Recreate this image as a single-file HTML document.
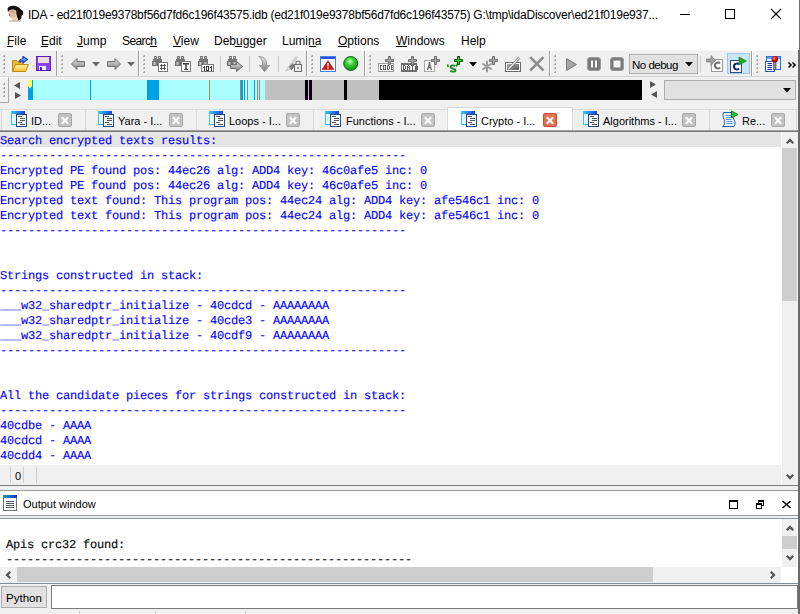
<!DOCTYPE html>
<html><head><meta charset="utf-8">
<style>
*{margin:0;padding:0;box-sizing:border-box}
html,body{width:800px;height:614px;overflow:hidden;background:#fff;position:relative;font-family:"Liberation Sans",sans-serif;font-size:12px;color:#000}
.a{position:absolute}
svg{position:absolute;overflow:visible}
.ui{font-family:"Liberation Sans",sans-serif;font-size:12px;white-space:nowrap;line-height:14px}
.mono{font-family:"Liberation Mono",monospace;font-size:12px;letter-spacing:-0.2px;white-space:pre;line-height:15px;text-rendering:geometricPrecision;-webkit-text-stroke:0.12px currentColor}
.ul{position:absolute;height:1px;background:#000;top:46px}
.grip{position:absolute;width:2px;height:18px}.grip::before,.grip::after{content:"";position:absolute;top:0;bottom:0;width:1px}.grip::after{left:1px;background:repeating-linear-gradient(to bottom,#a6a6a6 0,#a6a6a6 2px,transparent 2px,transparent 4px)}.grip::before{left:0;background:repeating-linear-gradient(to bottom,#d6d6d6 0,#d6d6d6 1px,#b0b0b0 1px,#b0b0b0 2px,transparent 2px,transparent 4px)}
.sep{position:absolute;top:51px;width:2px;height:25px;border-left:1px solid #a0a0a0;border-right:1px solid #fff}
.tsep{position:absolute;top:56px;width:1px;height:16px;background:#c8c8c8}
.tab{position:absolute;top:109px;height:21px;border-left:1px solid #d9d9d9}
.tt{position:absolute;top:115px;font-size:11px;line-height:12px;white-space:nowrap}
.cl{position:absolute;top:113px;width:14px;height:14px;border-radius:2px;background:#c2c2c2;border:1px solid #a8a8a8}
.cl::before,.cl::after{content:"";position:absolute;left:5px;top:1.5px;width:2px;height:9px;background:#fff;transform:rotate(45deg)}
.cl::after{transform:rotate(-45deg)}
.cl.act{background:#e3714f;border-color:#c8502e}
</style></head><body>
<!-- title bar -->
<svg style="left:4px;top:3px" width="22" height="22" viewBox="0 0 22 22">
<ellipse cx="9.5" cy="10" rx="5" ry="5.5" fill="#dcc0a6"/>
<path d="M3.5 6C4 3 8 2.5 11 3C14 3.5 16 5 17 7L17.5 15C16.5 16.5 15 17 14.5 18L13 14L12.5 8C11 6.5 8 6 5 7.5L4 9Z" fill="#17110e"/>
<circle cx="15.8" cy="9.8" r="3.4" fill="#17110e"/>
<path d="M8.5 14.5L13 13.5L14 18.5L8 18.5Z" fill="#e8d2be"/>
<path d="M4.5 18.5L17.5 18.5L17 17.5L5.5 17.5Z" fill="#c8a890"/>
<ellipse cx="5.6" cy="12" rx="1" ry="0.8" fill="#a85040"/>
<ellipse cx="8.5" cy="9" rx="2.5" ry="0.8" fill="#b89a88"/>
</svg>
<div id="title" class="a ui" style="left:28px;top:8px;letter-spacing:-0.227px">IDA - ed21f019e9378bf56d7fd6c196f43575.idb (ed21f019e9378bf56d7fd6c196f43575) G:\tmp\idaDiscover\ed21f019e937...</div>
<div class="a" style="left:680px;top:14px;width:10px;height:1px;background:#000"></div>
<div class="a" style="left:725px;top:9px;width:10px;height:10px;border:1px solid #000"></div>
<svg style="left:771px;top:9px" width="10" height="10" viewBox="0 0 10 10"><path d="M0 0L10 10M10 0L0 10" stroke="#000" stroke-width="1.1"/></svg>

<!-- menu -->
<div id="menu" class="a ui" style="left:0;top:34px;width:500px;height:14px">
<span class="a" style="left:7px">File</span>
<span class="a" style="left:41px">Edit</span>
<span class="a" style="left:77px">Jump</span>
<span class="a" style="left:122px;letter-spacing:-0.6px">Search</span>
<span class="a" style="left:173px">View</span>
<span class="a" style="left:214px">Debugger</span>
<span class="a" style="left:282px">Lumina</span>
<span class="a" style="left:338px">Options</span>
<span class="a" style="left:396px">Windows</span>
<span class="a" style="left:461px">Help</span>
</div>
<div class="ul" style="left:7px;width:6px"></div>
<div class="ul" style="left:41px;width:7px"></div>
<div class="ul" style="left:77px;width:6px"></div>
<div class="ul" style="left:150px;width:7px"></div>
<div class="ul" style="left:173px;width:8px"></div>
<div class="ul" style="left:235px;width:7px"></div>
<div class="ul" style="left:309px;width:7px"></div>
<div class="ul" style="left:338px;width:9px"></div>
<div class="ul" style="left:396px;width:11px"></div>

<!-- toolbar -->
<div class="a" style="left:0;top:50px;width:798px;height:27px;background:#f0f0f0;border-top:1px solid #f8f8f8;border-bottom:1px solid #d5d5d5"></div>
<div class="grip" style="left:3px;top:55px"></div>
<div class="sep" style="left:56px"></div>
<div class="grip" style="left:61px;top:55px"></div>
<div class="sep" style="left:138px"></div>
<div class="grip" style="left:143px;top:55px"></div>
<div class="tsep" style="left:220px"></div>
<div class="tsep" style="left:249px"></div>
<div class="tsep" style="left:278px"></div>
<div class="sep" style="left:306px"></div>
<div class="grip" style="left:311px;top:55px"></div>
<div class="sep" style="left:364px"></div>
<div class="grip" style="left:369px;top:55px"></div>
<div class="sep" style="left:549px"></div>
<div class="grip" style="left:554px;top:55px"></div>
<div class="tsep" style="left:700px"></div>
<div class="sep" style="left:751px"></div>
<div class="grip" style="left:756px;top:55px"></div>

<!-- open folder -->
<svg width="0" height="0" style="position:absolute"><defs>
<linearGradient id="gbin" x1="0" y1="0" x2="1" y2="0"><stop offset="0" stop-color="#7a7a7a"/><stop offset="0.5" stop-color="#c8c8c8"/><stop offset="1" stop-color="#7a7a7a"/></linearGradient>
<linearGradient id="ga" x1="0" y1="0" x2="0" y2="1"><stop offset="0" stop-color="#e4e4e4"/><stop offset="1" stop-color="#7e7e7e"/></linearGradient>
<linearGradient id="gfold" x1="0" y1="0" x2="0" y2="1"><stop offset="0" stop-color="#fff6a0"/><stop offset="1" stop-color="#f0c030"/></linearGradient>
<symbol id="bino" viewBox="0 0 11 10">
<rect x="2.5" y="0.5" width="2" height="2" fill="#d0d0d0" stroke="#7a7a7a"/>
<rect x="6.5" y="0.5" width="2" height="2" fill="#d0d0d0" stroke="#7a7a7a"/>
<rect x="1.5" y="3.5" width="3" height="1" fill="#e8e8e8" stroke="#7a7a7a"/>
<rect x="5.5" y="3.5" width="4" height="1" fill="#e8e8e8" stroke="#7a7a7a"/>
<rect x="0.5" y="5.5" width="4" height="4" fill="url(#gbin)" stroke="#707070"/>
<rect x="5.5" y="5.5" width="4" height="4" fill="url(#gbin)" stroke="#707070"/>
</symbol>
</defs></svg>
<svg style="left:12px;top:56px" width="17" height="17" viewBox="0 0 17 17">
<path d="M0.5 4.5L5 4.5L6 5.5L11 5.5L11 15.5L0.5 15.5Z" fill="#e8b830" stroke="#c08a10"/>
<path d="M3.5 8.5L16.5 8.5L13.5 15.5L0.5 15.5Z" fill="url(#gfold)" stroke="#c08a10"/>
<path d="M7.8 6.5C7.8 4.5 9 3.5 11.5 3.5" fill="none" stroke="#1a2fd0" stroke-width="2.2"/><path d="M11 0.5L15.5 3.5L11 6.8Z" fill="#30d8f8" stroke="#1a2fd0" stroke-width="1.2" stroke-linejoin="round"/><path d="M8.5 5C9 4 10 3.6 12 3.6" fill="none" stroke="#6ae8ff" stroke-width="0.7"/>
</svg>
<svg style="left:36px;top:56px" width="16" height="16" viewBox="0 0 16 16">
<rect x="0" y="0" width="15" height="15" fill="#6a22d6"/>
<rect x="1" y="1" width="13" height="13" fill="#8a44ee"/>
<rect x="2" y="1" width="11" height="6" fill="#ecdcdc"/>
<rect x="3" y="10" width="7" height="5" fill="#f4f4ff"/>
<rect x="4" y="11" width="2" height="3" fill="#5a18b8"/>
<rect x="0" y="0" width="15" height="1" fill="#5a18b8"/><rect x="0" y="14" width="15" height="1" fill="#5a18b8"/>
</svg>
<svg style="left:71px;top:58px" width="14" height="12" viewBox="0 0 14 12">
<path d="M0.5 6L6 0.5L6 3.5L13.5 3.5L13.5 8.5L6 8.5L6 11.5Z" fill="url(#ga)" stroke="#737373"/>
</svg>
<svg style="left:92px;top:62px" width="8" height="5" viewBox="0 0 8 5"><path d="M0 0L8 0L4 4.5Z" fill="#6a6a6a"/></svg>
<svg style="left:107px;top:58px" width="14" height="12" viewBox="0 0 14 12">
<path d="M13.5 6L8 0.5L8 3.5L0.5 3.5L0.5 8.5L8 8.5L8 11.5Z" fill="url(#ga)" stroke="#737373"/>
</svg>
<svg style="left:127px;top:62px" width="8" height="5" viewBox="0 0 8 5"><path d="M0 0L8 0L4 4.5Z" fill="#6a6a6a"/></svg>
<svg style="left:152px;top:56px" width="17" height="17" viewBox="0 0 17 17">
<use href="#bino" x="0" y="0" width="11" height="10"/>
<rect x="6.5" y="6.5" width="9" height="9" fill="#fff" stroke="#7a7a7a"/>
<path d="M9.5 8L9.5 14M12.5 8L12.5 14M8 9.5L14 9.5M8 12.5L14 12.5" stroke="#555" stroke-width="1"/>
</svg>
<svg style="left:175px;top:56px" width="17" height="17" viewBox="0 0 17 17">
<use href="#bino" x="0" y="0" width="11" height="10"/>
<rect x="6.5" y="5.5" width="9" height="10" fill="#fff" stroke="#7a7a7a"/>
<rect x="8" y="7" width="6" height="1.5" fill="#444"/><rect x="10.2" y="7" width="1.6" height="7" fill="#444"/><rect x="9" y="13" width="4" height="1" fill="#444"/>
<rect x="8" y="8" width="1" height="1" fill="#888"/><rect x="13" y="8" width="1" height="1" fill="#888"/>
</svg>
<svg style="left:198px;top:56px" width="17" height="17" viewBox="0 0 17 17"><use href="#bino" x="0" y="0" width="11" height="10"/><rect x="3.5" y="8.5" width="12" height="7" fill="#fff" stroke="#7a7a7a"/><rect x="6" y="10" width="1" height="1" fill="#3a3a3a"/><rect x="5" y="11" width="1" height="1" fill="#3a3a3a"/><rect x="6" y="11" width="1" height="1" fill="#3a3a3a"/><rect x="6" y="12" width="1" height="1" fill="#3a3a3a"/><rect x="6" y="13" width="1" height="1" fill="#3a3a3a"/><rect x="6" y="14" width="1" height="1" fill="#3a3a3a"/><rect x="8" y="10" width="1" height="1" fill="#3a3a3a"/><rect x="9" y="10" width="1" height="1" fill="#3a3a3a"/><rect x="10" y="10" width="1" height="1" fill="#3a3a3a"/><rect x="8" y="11" width="1" height="1" fill="#3a3a3a"/><rect x="10" y="11" width="1" height="1" fill="#3a3a3a"/><rect x="8" y="12" width="1" height="1" fill="#3a3a3a"/><rect x="10" y="12" width="1" height="1" fill="#3a3a3a"/><rect x="8" y="13" width="1" height="1" fill="#3a3a3a"/><rect x="10" y="13" width="1" height="1" fill="#3a3a3a"/><rect x="8" y="14" width="1" height="1" fill="#3a3a3a"/><rect x="9" y="14" width="1" height="1" fill="#3a3a3a"/><rect x="10" y="14" width="1" height="1" fill="#3a3a3a"/><rect x="13" y="10" width="1" height="1" fill="#3a3a3a"/><rect x="12" y="11" width="1" height="1" fill="#3a3a3a"/><rect x="13" y="11" width="1" height="1" fill="#3a3a3a"/><rect x="13" y="12" width="1" height="1" fill="#3a3a3a"/><rect x="13" y="13" width="1" height="1" fill="#3a3a3a"/><rect x="13" y="14" width="1" height="1" fill="#3a3a3a"/></svg>
<svg style="left:227px;top:56px" width="17" height="17" viewBox="0 0 17 17">
<use href="#bino" x="0" y="0" width="11" height="10"/>
<path d="M3.5 8.5L9.5 8.5L9.5 5.5L15.5 10.5L9.5 15.5L9.5 12.5L3.5 12.5Z" fill="url(#ga)" stroke="#6a6a6a"/>
</svg>
<svg style="left:258px;top:56px" width="13" height="17" viewBox="0 0 13 17">
<path d="M0.5 0.5C5 0.5 8.5 3 8.5 7L8.5 9.5L11.5 9.5L6.5 15.5L1.5 9.5L4.5 9.5L4.5 7C4.5 4 3 2 0.5 0.5Z" fill="url(#ga)" stroke="#8a8a8a" stroke-width="0.8"/>
</svg>
<svg style="left:285px;top:55px" width="17" height="17" viewBox="0 0 17 17">
<path d="M0.5 16L11 1.5L12.5 2.5L4 15Z" fill="#dcdcdc" stroke="#c0c0c0" stroke-width="0.8"/>
<path d="M4 12L7.5 8L10 11L6.5 15.5Z" fill="#7a7a7a"/>
<rect x="9.5" y="9.5" width="7" height="7" fill="#e8e8e8" stroke="#707070"/>
<path d="M11 9.5L11 7.5C11 5.5 15 5.5 15 7.5L15 9.5" fill="none" stroke="#707070" stroke-width="1.2"/>
<rect x="12.5" y="12" width="1" height="2" fill="#555"/>
</svg>
<svg style="left:320px;top:56px" width="16" height="16" viewBox="0 0 16 16">
<rect x="0.5" y="0.5" width="15" height="15" fill="#fff" stroke="#3a84f0"/>
<rect x="1" y="1" width="14" height="2" fill="#2f50d8"/>
<path d="M8 4.5L14 13.5L2 13.5Z" fill="#d01818" stroke="#a00" stroke-width="0.5"/>
<rect x="7.3" y="7" width="1.4" height="3.5" fill="#fff"/><rect x="7.3" y="11.3" width="1.4" height="1.3" fill="#fff"/>
</svg>
<svg style="left:343px;top:56px" width="16" height="16" viewBox="0 0 16 16">
<defs><radialGradient id="gb" cx="0.45" cy="0.35" r="0.6"><stop offset="0" stop-color="#c8ffc0"/><stop offset="0.45" stop-color="#3cd03c"/><stop offset="1" stop-color="#119a11"/></radialGradient></defs>
<circle cx="7.7" cy="7.5" r="7" fill="url(#gb)" stroke="#0a5a0a" stroke-width="0.9"/>
</svg>
<svg style="left:378px;top:56px" width="17" height="17" viewBox="0 0 17 17"><rect x="0.5" y="7.5" width="15" height="8" fill="#fff" stroke="#a0a0a0"/><rect x="2" y="9" width="1" height="1" fill="#5e5e5e"/><rect x="3" y="9" width="1" height="1" fill="#5e5e5e"/><rect x="2" y="10" width="1" height="1" fill="#5e5e5e"/><rect x="2" y="11" width="1" height="1" fill="#5e5e5e"/><rect x="2" y="12" width="1" height="1" fill="#5e5e5e"/><rect x="2" y="13" width="1" height="1" fill="#5e5e5e"/><rect x="3" y="13" width="1" height="1" fill="#5e5e5e"/><rect x="5" y="9" width="1" height="1" fill="#5e5e5e"/><rect x="6" y="9" width="1" height="1" fill="#5e5e5e"/><rect x="7" y="9" width="1" height="1" fill="#5e5e5e"/><rect x="5" y="10" width="1" height="1" fill="#5e5e5e"/><rect x="7" y="10" width="1" height="1" fill="#5e5e5e"/><rect x="5" y="11" width="1" height="1" fill="#5e5e5e"/><rect x="7" y="11" width="1" height="1" fill="#5e5e5e"/><rect x="5" y="12" width="1" height="1" fill="#5e5e5e"/><rect x="7" y="12" width="1" height="1" fill="#5e5e5e"/><rect x="5" y="13" width="1" height="1" fill="#5e5e5e"/><rect x="6" y="13" width="1" height="1" fill="#5e5e5e"/><rect x="7" y="13" width="1" height="1" fill="#5e5e5e"/><rect x="9" y="9" width="1" height="1" fill="#5e5e5e"/><rect x="10" y="9" width="1" height="1" fill="#5e5e5e"/><rect x="9" y="10" width="1" height="1" fill="#5e5e5e"/><rect x="11" y="10" width="1" height="1" fill="#5e5e5e"/><rect x="9" y="11" width="1" height="1" fill="#5e5e5e"/><rect x="11" y="11" width="1" height="1" fill="#5e5e5e"/><rect x="9" y="12" width="1" height="1" fill="#5e5e5e"/><rect x="11" y="12" width="1" height="1" fill="#5e5e5e"/><rect x="9" y="13" width="1" height="1" fill="#5e5e5e"/><rect x="10" y="13" width="1" height="1" fill="#5e5e5e"/><rect x="13" y="9" width="1" height="1" fill="#5e5e5e"/><rect x="14" y="9" width="1" height="1" fill="#5e5e5e"/><rect x="13" y="10" width="1" height="1" fill="#5e5e5e"/><rect x="13" y="11" width="1" height="1" fill="#5e5e5e"/><rect x="14" y="11" width="1" height="1" fill="#5e5e5e"/><rect x="13" y="12" width="1" height="1" fill="#5e5e5e"/><rect x="13" y="13" width="1" height="1" fill="#5e5e5e"/><rect x="14" y="13" width="1" height="1" fill="#5e5e5e"/><g transform="translate(7,0)"><path d="M3.5 0.5L5.5 0.5L5.5 3.5L8.5 3.5L8.5 5.5L5.5 5.5L5.5 8.5L3.5 8.5L3.5 5.5L0.5 5.5L0.5 3.5L3.5 3.5Z" fill="#a8a8a8" stroke="#6e6e6e"/></g></svg>
<svg style="left:401px;top:56px" width="17" height="17" viewBox="0 0 17 17"><rect x="0" y="7" width="16" height="9" fill="#6e6e6e"/><rect x="1" y="9" width="14" height="5" fill="#fff"/><rect x="2" y="9" width="1" height="1" fill="#5e5e5e"/><rect x="3" y="9" width="1" height="1" fill="#5e5e5e"/><rect x="2" y="10" width="1" height="1" fill="#5e5e5e"/><rect x="4" y="10" width="1" height="1" fill="#5e5e5e"/><rect x="2" y="11" width="1" height="1" fill="#5e5e5e"/><rect x="4" y="11" width="1" height="1" fill="#5e5e5e"/><rect x="2" y="12" width="1" height="1" fill="#5e5e5e"/><rect x="4" y="12" width="1" height="1" fill="#5e5e5e"/><rect x="2" y="13" width="1" height="1" fill="#5e5e5e"/><rect x="3" y="13" width="1" height="1" fill="#5e5e5e"/><rect x="7" y="9" width="1" height="1" fill="#5e5e5e"/><rect x="6" y="10" width="1" height="1" fill="#5e5e5e"/><rect x="8" y="10" width="1" height="1" fill="#5e5e5e"/><rect x="6" y="11" width="1" height="1" fill="#5e5e5e"/><rect x="7" y="11" width="1" height="1" fill="#5e5e5e"/><rect x="8" y="11" width="1" height="1" fill="#5e5e5e"/><rect x="6" y="12" width="1" height="1" fill="#5e5e5e"/><rect x="8" y="12" width="1" height="1" fill="#5e5e5e"/><rect x="6" y="13" width="1" height="1" fill="#5e5e5e"/><rect x="8" y="13" width="1" height="1" fill="#5e5e5e"/><rect x="10" y="9" width="1" height="1" fill="#5e5e5e"/><rect x="11" y="9" width="1" height="1" fill="#5e5e5e"/><rect x="12" y="9" width="1" height="1" fill="#5e5e5e"/><rect x="11" y="10" width="1" height="1" fill="#5e5e5e"/><rect x="11" y="11" width="1" height="1" fill="#5e5e5e"/><rect x="11" y="12" width="1" height="1" fill="#5e5e5e"/><rect x="11" y="13" width="1" height="1" fill="#5e5e5e"/><rect x="11" y="14" width="1" height="1" fill="#5e5e5e"/><rect x="15" y="9" width="1" height="1" fill="#5e5e5e"/><rect x="14" y="10" width="1" height="1" fill="#5e5e5e"/><rect x="16" y="10" width="1" height="1" fill="#5e5e5e"/><rect x="14" y="11" width="1" height="1" fill="#5e5e5e"/><rect x="15" y="11" width="1" height="1" fill="#5e5e5e"/><rect x="16" y="11" width="1" height="1" fill="#5e5e5e"/><rect x="14" y="12" width="1" height="1" fill="#5e5e5e"/><rect x="16" y="12" width="1" height="1" fill="#5e5e5e"/><rect x="14" y="13" width="1" height="1" fill="#5e5e5e"/><rect x="16" y="13" width="1" height="1" fill="#5e5e5e"/><g transform="translate(7,0)"><path d="M3.5 0.5L5.5 0.5L5.5 3.5L8.5 3.5L8.5 5.5L5.5 5.5L5.5 8.5L3.5 8.5L3.5 5.5L0.5 5.5L0.5 3.5L3.5 3.5Z" fill="#a8a8a8" stroke="#6e6e6e"/></g></svg>
<svg style="left:424px;top:56px" width="17" height="17" viewBox="0 0 17 17">
<rect x="0.5" y="4.5" width="10" height="11" fill="#fff" stroke="#a8a8a8"/>
<path d="M3.5 14L5.5 7.5L7.5 14M4 11.5L7 11.5" fill="none" stroke="#6a6a6a" stroke-width="1.3"/><circle cx="5.5" cy="7" r="1" fill="#6a6a6a"/>
<g transform="translate(7,0)"><path d="M3.5 0.5L5.5 0.5L5.5 3.5L8.5 3.5L8.5 5.5L5.5 5.5L5.5 8.5L3.5 8.5L3.5 5.5L0.5 5.5L0.5 3.5L3.5 3.5Z" fill="#a8a8a8" stroke="#6e6e6e"/></g></svg>
<svg style="left:446px;top:56px" width="18" height="17" viewBox="0 0 18 17">
<path d="M9.2 10.2C8.5 9 4.5 9 4.5 11C4.5 13 9.5 12.5 9.5 14.2C9.5 16 5.5 16 4.2 14.8" fill="none" stroke="#1f8a1f" stroke-width="1.9"/>
<path d="M2.2 8.5C1.5 9.5 1.8 10.5 2.2 11" fill="none" stroke="#1f8a1f" stroke-width="1.7"/>
<path d="M10.8 7.5C11.5 8.5 11 10 10.2 10.5" fill="none" stroke="#1f8a1f" stroke-width="1.5"/>
<g transform="translate(8,0)"><path d="M3.5 0.5L5.5 0.5L5.5 3.5L8.5 3.5L8.5 5.5L5.5 5.5L5.5 8.5L3.5 8.5L3.5 5.5L0.5 5.5L0.5 3.5L3.5 3.5Z" fill="#2ed82e" stroke="#0b4a0b"/></g></svg>
<svg style="left:469px;top:62px" width="8" height="5" viewBox="0 0 8 5"><path d="M0 0L8 0L4 4.5Z" fill="#000"/></svg>
<svg style="left:482px;top:56px" width="17" height="17" viewBox="0 0 17 17">
<path d="M5 5.5L5 15.5M1 8L9 13M9 8L1 13" stroke="#9a9a9a" stroke-width="2" stroke-linecap="round"/>
<g transform="translate(7,0)"><path d="M3.5 0.5L5.5 0.5L5.5 3.5L8.5 3.5L8.5 5.5L5.5 5.5L5.5 8.5L3.5 8.5L3.5 5.5L0.5 5.5L0.5 3.5L3.5 3.5Z" fill="#a8a8a8" stroke="#6e6e6e"/></g></svg>
<svg style="left:505px;top:56px" width="17" height="17" viewBox="0 0 17 17">
<defs><linearGradient id="ged" x1="0" y1="0" x2="1" y2="1"><stop offset="0" stop-color="#b0b0b0"/><stop offset="1" stop-color="#5a5a5a"/></linearGradient></defs>
<rect x="0.5" y="6.5" width="15" height="9" fill="#fff" stroke="#6a6a6a"/>
<rect x="2" y="8" width="12" height="6" fill="url(#ged)"/>
<path d="M3.5 13L14.5 1.5" stroke="#7a7a7a" stroke-width="2.6"/><path d="M3.5 13L14.5 1.5" stroke="#f4f4f4" stroke-width="1.1"/>
</svg>
<svg style="left:529px;top:56px" width="16" height="16" viewBox="0 0 16 16">
<path d="M1.2 1.2L14.5 14.5M14.5 1.2L1.2 14.5" stroke="#8e8e8e" stroke-width="2.6"/>
</svg>
<svg style="left:566px;top:58px" width="11" height="13" viewBox="0 0 11 13"><path d="M0.5 0.5L10.5 6.5L0.5 12.5Z" fill="#a4a4a4" stroke="#7a7a7a"/></svg>
<svg style="left:587px;top:57px" width="14" height="14" viewBox="0 0 14 14"><rect x="0.5" y="0.5" width="13" height="13" rx="2.5" fill="#7a7a7a" stroke="#9a9a9a"/><rect x="4" y="3.5" width="2" height="7" fill="#fff"/><rect x="8" y="3.5" width="2" height="7" fill="#fff"/></svg>
<svg style="left:610px;top:57px" width="14" height="14" viewBox="0 0 14 14"><rect x="0.5" y="0.5" width="13" height="13" rx="2.5" fill="#7a7a7a" stroke="#9a9a9a"/><rect x="3.5" y="3.5" width="7" height="7" fill="#f4f4f4"/></svg>
<div class="a" style="left:629px;top:54px;width:69px;height:20px;background:#e1e1e1;border:1px solid #adadad"></div>
<div class="a ui" style="left:632px;top:58px;font-size:11.5px;letter-spacing:-0.5px;color:#000">No debug</div>
<svg style="left:685px;top:62px" width="8" height="5" viewBox="0 0 8 5"><path d="M0 0L8 0L4 4.5Z" fill="#000"/></svg>
<svg style="left:706px;top:55px" width="18" height="17" viewBox="0 0 18 17">
<rect x="5.5" y="4.5" width="11" height="12" fill="#fff" stroke="#9a9a9a"/>
<path d="M14 8.5C13 7 9 7 9 10.5C9 14 13 14 14 12.5" fill="none" stroke="#6a6a6a" stroke-width="2"/>
<path d="M0.5 4L5 4L5 0.5L9.5 5.5L5 10.5L5 7L0.5 7Z" fill="#a0a0a0" stroke="#7d7d7d" stroke-width="0.8"/>
</svg>
<div class="a" style="left:727px;top:53px;width:23px;height:21px;background:#cce4f7;border:1px solid #99c9ef"></div>
<svg style="left:730px;top:56px" width="18" height="17" viewBox="0 0 18 17">
<rect x="0.5" y="4.5" width="11" height="12" fill="#fff" stroke="#2c4a86"/>
<path d="M9 8.5C8 7 4 7 4 10.5C4 14 8 14 9 12.5" fill="none" stroke="#0a1f7a" stroke-width="2"/>
<path d="M9 1L16.5 5L9 9Z" fill="#22aa22" stroke="#0f7a0f" stroke-width="0.6"/>
</svg>
<svg style="left:765px;top:55px" width="17" height="17" viewBox="0 0 17 17">
<defs><radialGradient id="grb" cx="0.4" cy="0.35" r="0.6"><stop offset="0" stop-color="#ff9a9a"/><stop offset="0.5" stop-color="#e81010"/><stop offset="1" stop-color="#a00000"/></radialGradient></defs>
<rect x="1.5" y="1.5" width="14" height="13" fill="#e8f8ff" stroke="#2f74e0"/>
<rect x="2" y="2" width="13" height="2" fill="#5aa8f0"/>
<rect x="0.5" y="6.5" width="9" height="10" fill="#fafcff" stroke="#2a5aa0"/>
<rect x="2.5" y="8" width="4.5" height="1" fill="#1a30b0"/><rect x="2.5" y="10" width="4.5" height="1" fill="#1a30b0"/><rect x="2.5" y="12" width="4.5" height="1" fill="#1a30b0"/><rect x="2.5" y="14" width="4.5" height="1" fill="#1a30b0"/>
<rect x="8.5" y="6.5" width="2.5" height="8" fill="#8e8e8e" stroke="#3a3a70" stroke-width="0.6"/>
<circle cx="9.8" cy="4.3" r="3.2" fill="url(#grb)"/>
</svg>
<svg style="left:788px;top:62px" width="9" height="6" viewBox="0 0 9 6"><path d="M0.5 0.5L3 3L0.5 5.5M4.5 0.5L7 3L4.5 5.5" fill="none" stroke="#000" stroke-width="1.6"/></svg>


<!-- nav toolbar -->
<div class="a" style="left:0;top:77px;width:798px;height:27px;background:#f0f0f0"></div>
<div class="a" style="left:0;top:77px;width:9px;height:26px;border-right:1px solid #a8a8a8;border-bottom:1px solid #a8a8a8;border-top:1px solid #fff"></div>
<div class="grip" style="left:3px;top:83px;height:14px"></div>
<svg style="left:14px;top:82px" width="7" height="18" viewBox="0 0 7 18"><path d="M6 0L6 7L0 3.5Z" fill="#555"/><path d="M1 10L1 17L7 13.5Z" fill="#555"/></svg>
<div class="a" style="left:28px;top:80px;width:237px;height:20px;background:#aaffff"></div>
<div class="a" style="left:28px;top:80px;width:5px;height:20px;background:#00a0e8"></div>
<svg style="left:28px;top:80px" width="4" height="9" viewBox="0 0 4 9"><path d="M0 0L4 0L4 6L2 8.5L0 6Z" fill="#ffff60"/></svg>
<div class="a" style="left:90px;top:80px;width:1px;height:20px;background:#00a0e8"></div>
<div class="a" style="left:147px;top:80px;width:12px;height:20px;background:#00a0e8"></div>
<div class="a" style="left:209px;top:80px;width:1px;height:20px;background:#b08050"></div>
<div class="a" style="left:240px;top:80px;width:1px;height:20px;background:#b08050"></div>
<div class="a" style="left:241px;top:80px;width:2px;height:20px;background:#00a0e8"></div>
<div class="a" style="left:244px;top:80px;width:1px;height:20px;background:#00a0e8"></div>
<div class="a" style="left:247px;top:80px;width:1px;height:20px;background:#b08050"></div>
<div class="a" style="left:254px;top:80px;width:1px;height:20px;background:#00a0e8"></div>
<div class="a" style="left:257px;top:80px;width:1px;height:20px;background:#b08050"></div>
<div class="a" style="left:259px;top:80px;width:1px;height:20px;background:#b08050"></div>
<div class="a" style="left:265px;top:80px;width:114px;height:20px;background:#c0c0c0"></div>
<div class="a" style="left:305px;top:80px;width:7px;height:20px;background:#000"></div>
<div class="a" style="left:308px;top:80px;width:1px;height:20px;background:#ff9cff"></div>
<div class="a" style="left:344px;top:80px;width:3px;height:20px;background:#000"></div>
<div class="a" style="left:379px;top:80px;width:263px;height:20px;background:#000"></div>
<svg style="left:650px;top:81px" width="7" height="18" viewBox="0 0 7 18"><path d="M0 0L0 7L6 3.5Z" fill="#555"/><path d="M7 10L7 17L1 13.5Z" fill="#555"/></svg>
<div class="a" style="left:664px;top:80px;width:132px;height:20px;background:#e1e1e1;border:1px solid #adadad"></div>
<svg style="left:783px;top:88px" width="8" height="5" viewBox="0 0 8 5"><path d="M0 0L8 0L4 4.5Z" fill="#000"/></svg>

<!-- tabs -->
<div class="a" style="left:0;top:104px;width:798px;height:27px;background:#f0f0f0"></div>
<div class="a" style="left:0;top:109px;width:798px;height:1px;background:#dcdcdc"></div>
<div class="tab" style="left:1px;width:85px"></div>
<div class="tab" style="left:85px;width:111px"></div>
<div class="tab" style="left:196px;width:117px"></div>
<div class="tab" style="left:313px;width:134px"></div>
<div class="tab" style="left:572px;width:137px"></div>
<div class="tab" style="left:709px;width:88px;border-right:1px solid #d9d9d9"></div>
<div class="a" style="left:447px;top:107px;width:126px;height:24px;background:#fff;border:1px solid #d9d9d9;border-bottom:none"></div>

<svg width="0" height="0" style="position:absolute"><defs>
<linearGradient id="gdb" x1="0" y1="0" x2="1" y2="0"><stop offset="0" stop-color="#38c8f8"/><stop offset="1" stop-color="#2040d8"/></linearGradient>
<symbol id="doc" viewBox="0 0 17 17">
<rect x="0" y="0" width="14" height="14" fill="url(#gdb)"/>
<rect x="1" y="3" width="12" height="10" fill="#e4fcff"/>
<rect x="5" y="3" width="11" height="13" fill="#1f4a8a"/>
<rect x="6" y="4" width="9" height="11" fill="#f8fbff"/>
<rect x="7" y="5" width="4" height="1" fill="#555"/>
<rect x="9" y="7" width="5" height="1" fill="#555"/>
<rect x="9" y="9" width="5" height="1" fill="#555"/>
<rect x="7" y="11" width="4" height="1" fill="#555"/>
<rect x="9" y="13" width="5" height="1" fill="#555"/>
</symbol>
</defs></svg>
<svg style="left:11px;top:111px" width="17" height="17" viewBox="0 0 17 17"><use href="#doc"/></svg>
<div class="tt" style="left:31px">ID...</div>
<div class="cl" style="left:58px"></div>

<svg style="left:98px;top:111px" width="17" height="17" viewBox="0 0 17 17"><use href="#doc"/></svg>
<div class="tt" style="left:118px">Yara - I...</div>
<div class="cl" style="left:169px"></div>

<svg style="left:209px;top:111px" width="17" height="17" viewBox="0 0 17 17">
<use href="#doc"/>
</svg>
<div class="tt" style="left:229px">Loops - I...</div>
<div class="cl" style="left:286px"></div>

<svg style="left:325px;top:111px" width="17" height="17" viewBox="0 0 17 17">
<use href="#doc"/>
</svg>
<div class="tt" style="left:346px">Functions - I...</div>
<div class="cl" style="left:421px"></div>

<svg style="left:461px;top:111px" width="17" height="17" viewBox="0 0 17 17">
<use href="#doc"/>
</svg>
<div class="tt" style="left:481px">Crypto - I...</div>
<div class="cl act" style="left:543px"></div>

<svg style="left:583px;top:111px" width="17" height="17" viewBox="0 0 17 17">
<use href="#doc"/>
</svg>
<div class="tt" style="left:603px">Algorithms - I...</div>
<div class="cl" style="left:682px"></div>

<svg style="left:721px;top:110px" width="17" height="17" viewBox="0 0 17 17">
<path d="M2.5 2.5L10.5 2.5C11.5 5 12 7 12.5 9C14.5 11 14.5 14 13 16.5L1.5 16.5C3.5 15 4 13 3.5 11C3 9 1 6 2.5 2.5Z" fill="#f0f8ff" stroke="#2a5aa8"/>
<rect x="4.5" y="5" width="6" height="1" fill="#5a94dc"/><rect x="4.5" y="7" width="6" height="1" fill="#5a94dc"/><rect x="4.5" y="9" width="6" height="1" fill="#5a94dc"/>
<rect x="5.5" y="11" width="6" height="1" fill="#5a94dc"/><rect x="5.5" y="13" width="6" height="1" fill="#5a94dc"/>
<path d="M10.5 1L17 4.5L10.5 8Z" fill="#28c828" stroke="#0a5a0a" stroke-width="0.8"/>
</svg>
<div class="tt" style="left:742px">Re...</div>
<div class="cl" style="left:771px"></div>

<div class="a" style="left:0;top:130px;width:798px;height:1px;background:#a2a2a2"></div><div class="a" style="left:0;top:131px;width:798px;height:1px;background:#7a7a7a"></div>

<!-- content -->
<div class="a" style="left:0;top:132px;width:781px;height:15px;background:#e5e5e5"></div>
<div id="content" class="a mono" style="left:0;top:134px;color:#0000ff">Search encrypted texts results:
----------------------------------------------------------
Encrypted PE found pos: 44ec26 alg: ADD4 key: 46c0afe5 inc: 0
Encrypted PE found pos: 44ec26 alg: ADD4 key: 46c0afe5 inc: 0
Encrypted text found: This program pos: 44ec24 alg: ADD4 key: afe546c1 inc: 0
Encrypted text found: This program pos: 44ec24 alg: ADD4 key: afe546c1 inc: 0
----------------------------------------------------------


Strings constructed in stack:
----------------------------------------------------------
___w32_sharedptr_initialize - 40cdcd - AAAAAAAA
___w32_sharedptr_initialize - 40cde3 - AAAAAAAA
___w32_sharedptr_initialize - 40cdf9 - AAAAAAAA
----------------------------------------------------------


All the candidate pieces for strings constructed in stack:
----------------------------------------------------------
40cdbe - AAAA
40cdcd - AAAA
40cdd4 - AAAA</div>
<!-- v scrollbar -->
<div class="a" style="left:782px;top:132px;width:16px;height:353px;background:#f0f0f0"></div>
<div class="a" style="left:782px;top:148px;width:15px;height:153px;background:#cdcdcd"></div>
<svg style="left:786px;top:138px" width="8" height="6" viewBox="0 0 8 6"><path d="M0.8 5.2L4 2L7.2 5.2" fill="none" stroke="#555" stroke-width="2.3"/></svg>
<svg style="left:786px;top:474px" width="8" height="6" viewBox="0 0 8 6"><path d="M0.8 0.8L4 4L7.2 0.8" fill="none" stroke="#555" stroke-width="2.3"/></svg>

<!-- status -->
<div class="a" style="left:0;top:465px;width:781px;height:20px;background:#f0f0f0"></div>
<div class="a" style="left:10px;top:467px;width:1px;height:16px;background:#d0d0d0"></div>
<div class="a" style="left:23px;top:467px;width:1px;height:16px;background:#d0d0d0"></div>
<div class="a" style="left:36px;top:467px;width:1px;height:16px;background:#d0d0d0"></div>
<div class="a ui" style="left:15px;top:470px;font-size:11px;line-height:12px">0</div>

<!-- splitter -->
<div class="a" style="left:0;top:485px;width:798px;height:1px;background:#7a7a7a"></div>
<div class="a" style="left:0;top:486px;width:798px;height:4px;background:#f0f0f0"></div>
<div class="a" style="left:0;top:490px;width:798px;height:1px;background:#999"></div>

<!-- output header -->
<div class="a" style="left:0;top:491px;width:798px;height:24px;background:#fff"></div>
<svg style="left:3px;top:495px" width="14" height="16" viewBox="0 0 14 16">
<defs><linearGradient id="gob" x1="0" y1="0" x2="1" y2="0"><stop offset="0" stop-color="#1aa0a8"/><stop offset="1" stop-color="#1030c8"/></linearGradient></defs>
<rect x="0" y="0" width="14" height="16" fill="#6a747e"/>
<rect x="1" y="3" width="12" height="12" fill="#fdfeff"/>
<rect x="0" y="0" width="14" height="3" fill="url(#gob)"/>
<rect x="3" y="6" width="8" height="1" fill="#505860"/><rect x="3" y="8" width="8" height="1" fill="#505860"/><rect x="3" y="10" width="8" height="1" fill="#505860"/><rect x="3" y="12" width="8" height="1" fill="#505860"/>
</svg>
<div class="a ui" style="left:23px;top:497px;font-size:11px">Output window</div>
<div class="a" style="left:729px;top:500px;width:9px;height:9px;border:1px solid #000;border-top-width:2px"></div>
<div class="a" style="left:758px;top:500px;width:6px;height:6px;border:1px solid #000;border-top-width:2px"></div>
<div class="a" style="left:756px;top:503px;width:6px;height:6px;border:1px solid #000;border-top-width:2px;background:#fff"></div>
<svg style="left:782px;top:501px" width="9" height="7" viewBox="0 0 9 7"><path d="M0.5 0L8.5 7M8.5 0L0.5 7" stroke="#000" stroke-width="1.5"/></svg>
<div class="a" style="left:0;top:515px;width:798px;height:1px;background:#9a9a9a"></div>
<div class="a" style="left:0;top:516px;width:798px;height:2px;background:#f0f0f0"></div>
<div class="a" style="left:0;top:518px;width:798px;height:1px;background:#8c96a6"></div>

<!-- output content -->
<div class="a mono" style="left:6px;top:538px;color:#000">Apis crc32 found:
----------------------------------------------------------</div>
<div class="a" style="left:0;top:567px;width:781px;height:16px;background:#f0f0f0"></div>
<div class="a" style="left:17px;top:567px;width:636px;height:15px;background:#cdcdcd"></div>
<svg style="left:5px;top:571px" width="6" height="8" viewBox="0 0 6 8"><path d="M5.2 0.8L2 4L5.2 7.2" fill="none" stroke="#555" stroke-width="2.3"/></svg>
<svg style="left:770px;top:571px" width="6" height="8" viewBox="0 0 6 8"><path d="M0.8 0.8L4 4L0.8 7.2" fill="none" stroke="#555" stroke-width="2.3"/></svg>
<div class="a" style="left:782px;top:519px;width:15px;height:48px;background:#f0f0f0"></div>
<div class="a" style="left:782px;top:536px;width:15px;height:13px;background:#cdcdcd"></div>
<svg style="left:786px;top:525px" width="8" height="6" viewBox="0 0 8 6"><path d="M0.8 5.2L4 2L7.2 5.2" fill="none" stroke="#555" stroke-width="2.3"/></svg>
<svg style="left:786px;top:555px" width="8" height="6" viewBox="0 0 8 6"><path d="M0.8 0.8L4 4L7.2 0.8" fill="none" stroke="#555" stroke-width="2.3"/></svg>

<!-- python bar -->
<div class="a" style="left:0;top:583px;width:798px;height:31px;background:#f0f0f0;border-top:1px solid #858d9a"></div>
<div class="a ui" style="left:1px;top:586px;width:46px;height:22px;border:1px solid #adadad;background:#e1e1e1;text-align:center;line-height:20px;padding-top:1px;font-size:11.5px">Python</div>
<div class="a" style="left:51px;top:585px;width:747px;height:24px;border:1px solid #7a7a7a;background:#fff"></div>
<div class="a" style="left:79px;top:611px;width:1px;height:3px;background:#d0d0d0"></div>
<div class="a" style="left:155px;top:611px;width:1px;height:3px;background:#d0d0d0"></div><div class="a" style="left:245px;top:611px;width:1px;height:3px;background:#d0d0d0"></div>

<!-- right window border -->
<div class="a" style="left:799px;top:0;width:1px;height:50px;background:#707070"></div>
<div class="a" style="left:798px;top:50px;width:2px;height:564px;background:#6a6a6a"></div>
</body></html>
